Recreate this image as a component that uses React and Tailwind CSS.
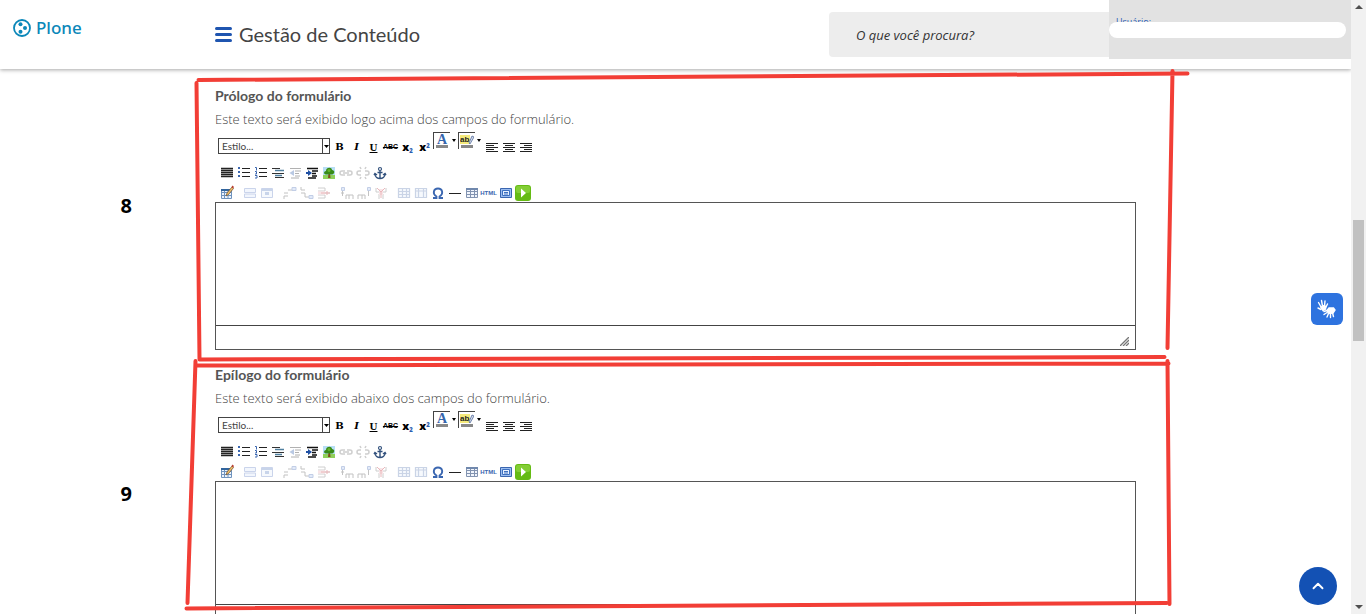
import { ChevronUp } from 'lucide-react';

const sections = [
    {
        id: 'prologo',
        number: '8',
        numberClass: 'pt-[104px]',
        title: 'Prólogo do formulário',
        description: 'Este texto será exibido logo acima dos campos do formulário.',
    },
    {
        id: 'epilogo',
        number: '9',
        numberClass: 'pt-[113px]',
        title: 'Epílogo do formulário',
        description: 'Este texto será exibido abaixo dos campos do formulário.',
    },
];

function Icon({ children, faded }) {
    return (
        <svg viewBox="0 0 16 16" className={faded ? 'size-4 shrink-0 opacity-35' : 'size-4 shrink-0'} fill="none" aria-hidden="true">
            {children}
        </svg>
    );
}

function ToolButton({ label, children }) {
    return (
        <button type="button" aria-label={label} title={label} className="flex h-4 w-[17px] shrink-0 items-center justify-center text-black">
            {children}
        </button>
    );
}

function Align({ d }) {
    return (
        <Icon>
            <path d={d} stroke="#222" strokeWidth="1" shapeRendering="crispEdges" />
        </Icon>
    );
}

const alignments = [
    ['Alinhar à esquerda', 'M2 4.5h12M2 6.5h8M2 8.5h12M2 10.5h8M2 12.5h12'],
    ['Centralizar', 'M2 4.5h12M4 6.5h8M2 8.5h12M4 10.5h8M2 12.5h12'],
    ['Alinhar à direita', 'M2 4.5h12M6 6.5h8M2 8.5h12M6 10.5h8M2 12.5h12'],
];

const grid = 'M2.5 3.5h11v9h-11zM2.5 6.5h11M2.5 9.5h11M6.5 3.5v9M10.5 3.5v9';

const listTools = [
    ['Justificar', <path d="M2 3.5h12M2 5.5h12M2 7.5h12M2 9.5h12M2 11.5h12" stroke="#222" strokeWidth="1.3" />],
    ['Lista não ordenada', <>
        <path d="M6 3.5h8M6 7.5h8M6 11.5h8" stroke="#222" />
        <path d="M2 3h2M2 7h2M2 11h2" stroke="#3a66b0" strokeWidth="2" />
    </>],
    ['Lista ordenada', <>
        <path d="M6 3.5h8M6 7.5h8M6 11.5h8" stroke="#222" />
        <path d="M2 2.5h1.5v3M2 6.5h1.5v2.5H2M2 10.5h2v2.5H2" stroke="#3a66b0" />
    </>],
    ['Lista de definições', <>
        <path d="M2 3.5h8M2 8.5h12M5 12.5h9" stroke="#333" />
        <path d="M5 5.5h9M5 10.5h7" stroke="#4f7f9f" strokeWidth="1.5" />
    </>],
    ['Diminuir recuo', <>
        <path d="M3 3.5h11M8 6h6M8 8.5h4M8 11h5M4 13h8" stroke="#222" />
        <path d="M7 5v6L2.5 8z" fill="#3a66b0" />
    </>, true],
    ['Aumentar recuo', <>
        <path d="M3 3.5h11M8 6h6M8 8.5h4M8 11h5M4 13h8" stroke="#111" strokeWidth="1.5" />
        <path d="M2 8h3" stroke="#1e4fa3" strokeWidth="2" />
        <path d="M4 5v6l4-3z" fill="#1e4fa3" />
    </>],
    ['Inserir imagem', <>
        <path d="M2 2h12v9H2z" fill="#b8dff5" />
        <path d="M2 10h12v4H2z" fill="#8fd05a" />
        <path d="M7.5 8h1.5l.5 5H7z" fill="#804d20" />
        <path d="M5 9.5C2 9 3 6 5 6c0-4 6-4 6-1 3 0 3 4 0 4.5z" fill="#388b17" />
        <circle cx="8" cy="5.5" r="1.5" fill="#66b52b" />
    </>],
    ['Inserir link', <path d="M7 6H4q-2 0-2 2t2 2h3M9 6h3q2 0 2 2t-2 2H9M5 8h6" stroke="#777" strokeWidth="1.5" />, true],
    ['Remover link', <path d="M6 6H4q-2 0-2 2t2 2h2M10 6h2q2 0 2 2t-2 2h-2M6 4 5 2M10 4l1-2M6 12l-1 2M10 12l1 2" stroke="#777" strokeWidth="1.5" />, true],
    ['Âncora', <>
        <circle cx="8" cy="4" r="1.5" stroke="#32517d" strokeWidth="1.2" />
        <path d="M8 5.5V13M5.5 7.5h5M3 9c0 3 2.5 4.5 5 4.5s5-1.5 5-4.5M2 10l1-1.500 2 1.500M14 10l-1-1.500-2 1.500" stroke="#32517d" strokeWidth="1.4" />
    </>],
];

// each inner list is a group, separated by a small gap
const tableTools = [
    [
        ['Inserir tabela', <>
            <path d="M2.5 4.5h10v9h-10zM2.5 7.5h10M2.5 10.5h10M5.5 4.5v9M9 4.5v9" fill="#edf4fd" stroke="#6f93be" />
            <path d="M2 4h11v2H2z" fill="#32659d" />
            <path d="m7 11 1-3 5-6 1.5 1.5-5 6z" fill="#efbd68" stroke="#6b5132" strokeWidth=".7" />
            <path d="m12.5 2 1-1.5L15 2l-1 1.5z" fill="#b93b30" />
        </>],
    ],
    [
        ['Propriedades da linha', <path d="M2.5 3.5h11v4h-11zM2.5 9h11v3.5h-11z" fill="#dce6fa" stroke="#6b86c8" />, true],
        ['Propriedades da célula', <>
            <path d="M2.5 3.5h11v9h-11z" fill="#e7eefb" stroke="#6b86c8" />
            <path d="M3 4h10v2H3zM6 7h4v3H6z" fill="#6385c4" />
        </>, true],
    ],
    [
        ['Inserir linha antes', <>
            <path d="M2 14v-3h4M2 8h4M6 5h4" stroke="#555" />
            <path d="M10 2.5h4v3h-4z" fill="#adc5ee" stroke="#5475b8" />
        </>, true],
        ['Inserir linha depois', <>
            <path d="M2 2v3h4M2 8h4v4h4" stroke="#555" />
            <path d="M10 10.5h4v3h-4z" fill="#adc5ee" stroke="#5475b8" />
        </>, true],
        ['Remover linha', <>
            <path d="M2 3h7v3H2M2 13h7v-3H2M2 8h12" stroke="#777" />
            <path d="M2 6.5h7v3H2z" fill="#eeb5bb" />
            <path d="M5 8h9M11 6v4" stroke="#c5343f" />
        </>, true],
    ],
    [
        ['Inserir coluna antes', <>
            <path d="M3.5 6v5M2 8h3M7 14v-4h3v4M10 10h4v4" stroke="#555" />
            <path d="M2.5 2.5h3v3h-3z" fill="#adc5ee" stroke="#5475b8" />
        </>, true],
        ['Inserir coluna depois', <>
            <path d="M12.5 6v5M2 14v-4h4v4M6 10h3v4" stroke="#555" />
            <path d="M11.5 2.5h3v3h-3z" fill="#adc5ee" stroke="#5475b8" />
        </>, true],
        ['Remover coluna', <>
            <path d="M3 3v4h3M13 3v4h-3M6 14V9M10 14V9" stroke="#777" />
            <path d="M6 4h4v6H6z" fill="#eeb5bb" />
            <path d="m4 3 4 4 4-4M8 7v6" stroke="#c5343f" />
        </>, true],
    ],
    [
        ['Dividir células', <path d={grid} fill="#e7eefb" stroke="#6b86b8" strokeWidth="1.2" />, true],
        ['Mesclar células', <path d="M2.5 3.5h11v9h-11zM2.5 6h11M5.5 3.5v9M10.5 3.5v9" fill="#e7eefb" stroke="#6b86b8" strokeWidth="1.2" />, true],
        ['Caractere especial', <path d="M3 13h3.5v-1.5C2 9 3.5 3.5 8 3.5s6 5.5 1.5 8V13H13" stroke="#3a66b0" strokeWidth="1.8" />],
        ['Linha horizontal', <path d="M2 8.5h12" stroke="#222" shapeRendering="crispEdges" />],
        ['Tabela', <>
            <path d={grid} fill="#f1f5fc" stroke="#8293b0" />
            <path d="M2 3h12v2H2z" fill="#7088ad" />
        </>],
        ['Editar HTML', null],
        ['Tela cheia', <>
            <path d="M2.5 3.5h11v9h-11z" fill="#9bbdf0" stroke="#3a66b0" />
            <path d="M4.5 5.5h7v5h-7z" fill="#e8f1ff" stroke="#3d70c0" />
            <path d="M6 7.5h4M6 9h4" stroke="#3d70c0" />
        </>],
        ['Inserir mídia', <>
            <rect x="0" y="0" width="16" height="16" rx="3" fill="#65bb14" />
            <rect x="1" y="1" width="14" height="7" rx="2" fill="#83ce35" />
            <path d="M6 3.5 11 8l-5 4.5z" fill="#fff" />
        </>],
    ],
];

function ColorButton({ label, children }) {
    return (
        <div className="flex w-[25px] shrink-0 self-start pt-px">
            <button type="button" aria-label={label} className="flex size-[17px] items-center justify-center border-t border-l border-[#444]">
                {children}
            </button>
            <button type="button" aria-label={`${label}: opções`} className="flex flex-1 items-center justify-center">
                <svg viewBox="0 0 4 3" className="h-[3px] w-1" aria-hidden="true">
                    <path d="M0 0h4L2 3z" fill="#000" />
                </svg>
            </button>
        </div>
    );
}

function Toolbar() {
    return (
        <div className="mt-1 pl-[3px]">
            <div className="flex h-6 items-end">
                <div className="relative mr-px mb-px h-4 w-28 shrink-0">
                    <select aria-label="Estilo" className="block h-4 w-full appearance-none border border-[#444] bg-white pl-[3px] font-['Lato'] text-[10px] text-[#444]">
                        <option>Estilo...</option>
                    </select>
                    <span className="pointer-events-none absolute inset-y-0 right-0 flex w-2 items-center justify-center border border-[#444]">
                        <svg viewBox="0 0 5 3" className="h-[3px] w-[5px] shrink-0" aria-hidden="true">
                            <path d="M0 0h5L2.5 3z" fill="#000" />
                        </svg>
                    </span>
                </div>
                <ToolButton label="Negrito"><span className="font-['DejaVu_Serif'] text-[10px] leading-4 font-bold">B</span></ToolButton>
                <ToolButton label="Itálico"><span className="font-['DejaVu_Serif'] text-[10px] leading-4 font-bold italic">I</span></ToolButton>
                <ToolButton label="Sublinhado"><span className="font-['Liberation_Serif'] text-[11px] leading-4 font-bold underline">U</span></ToolButton>
                <ToolButton label="Tachado"><span className="font-['Liberation_Sans'] text-[7px] leading-4 font-bold line-through">ABC</span></ToolButton>
                <ToolButton label="Subscrito">
                    <span className="font-['Open_Sans'] text-[11px] leading-4 font-extrabold">x<sub className="text-[6px] text-[#2a5db0]">2</sub></span>
                </ToolButton>
                <ToolButton label="Sobrescrito">
                    <span className="font-['Open_Sans'] text-[11px] leading-4 font-extrabold">x<sup className="text-[6px] text-[#2a5db0]">2</sup></span>
                </ToolButton>
                <ColorButton label="Cor do texto">
                    <span className="h-[14px] w-3 border-b-[3px] border-[#888] text-center font-['Liberation_Serif'] text-[14px] leading-[11px] font-bold text-[#3565ad]">A</span>
                </ColorButton>
                <ColorButton label="Cor de fundo">
                    <svg viewBox="0 0 14 14" className="size-[14px]" aria-hidden="true">
                        <path d="M0 1h10v9H0z" fill="#f5ea7b" />
                        <text x="0" y="8" fontSize="8" fontWeight="bold" fontFamily="Liberation Sans" fill="#222">ab</text>
                        <path d="m9 9 3-7 2 1-4 7z" fill="#d7dce8" stroke="#536da0" strokeWidth=".8" />
                        <path d="M1 11h12v3H1z" fill="#888" />
                    </svg>
                </ColorButton>
                {alignments.map(([label, d]) => (
                    <ToolButton key={label} label={label}><Align d={d} /></ToolButton>
                ))}
            </div>
            <div className="mt-[10px] flex h-4">
                {listTools.map(([label, drawing, faded]) => (
                    <ToolButton key={label} label={label}><Icon faded={faded}>{drawing}</Icon></ToolButton>
                ))}
            </div>
            <div className="mt-1 mb-px flex h-4 gap-1.5">
                {tableTools.map((group) => (
                    <div key={group[0][0]} className="flex">
                        {group.map(([label, drawing, faded]) => (
                            <ToolButton key={label} label={label}>
                                {drawing ? (
                                    <Icon faded={faded}>{drawing}</Icon>
                                ) : (
                                    <span className="font-['Liberation_Sans'] text-[6px] leading-4 font-bold text-[#3a66b0]">HTML</span>
                                )}
                            </ToolButton>
                        ))}
                    </div>
                ))}
            </div>
        </div>
    );
}

function EditorSection({ section }) {
    return (
        <section className="grid grid-cols-[1fr_minmax(0,921px)_1fr] pb-[17px]">
            <div className={`pr-[83px] text-right font-['Noto_Sans'] text-xl leading-7 font-bold text-black ${section.numberClass}`}>
                {section.number}
            </div>
            <div>
                <label htmlFor={section.id} className="block font-['Lato'] text-[14px] leading-4 font-bold text-[#555]">{section.title}</label>
                <p className="mt-[7px] text-[13px] leading-4 font-light text-[#444]">{section.description}</p>
                <Toolbar />
                <div className="border border-[#555]">
                    <textarea id={section.id} className="block h-[122px] w-full resize-none outline-none" />
                    <div className="flex h-6 items-end justify-end border-t border-[#444] pr-1.5 pb-[3px]">
                        <svg viewBox="0 0 9 9" className="size-[9px]" aria-hidden="true">
                            <path d="M0 9 9 0M3 9l6-6M6 9l3-3" stroke="#777" strokeWidth="1.3" />
                        </svg>
                    </div>
                </div>
            </div>
        </section>
    );
}

function Header() {
    return (
        <header className="relative grid h-[69px] grid-cols-[1fr_minmax(0,921px)_1fr] bg-white shadow-[0_1px_4px_rgba(0,0,0,0.35)]">
            <a href="#" className="mt-[18px] flex h-5 items-center gap-[5px] pl-[13px] text-[#0a87b9]">
                <svg viewBox="0 0 18 18" className="size-[18px]" fill="none" aria-hidden="true">
                    <circle cx="9" cy="9" r="8" stroke="currentColor" strokeWidth="1.8" />
                    <circle cx="7.5" cy="5.2" r="2" fill="currentColor" />
                    <circle cx="12" cy="9" r="2" fill="currentColor" />
                    <circle cx="7.5" cy="12.8" r="2" fill="currentColor" />
                </svg>
                <span className="font-['Noto_Sans'] text-[17px] leading-5 font-medium">Plone</span>
            </a>
            <div className="flex items-start justify-between">
                <div className="mt-5 flex items-center gap-[7px]">
                    <button type="button" aria-label="Menu" className="flex h-7 w-[17px] flex-col justify-center gap-[3px]">
                        <span className="h-[3px] rounded-xs bg-[#1f55b0]" />
                        <span className="h-[3px] rounded-xs bg-[#1f55b0]" />
                        <span className="h-[3px] rounded-xs bg-[#1f55b0]" />
                    </button>
                    <span className="font-['Lato'] text-[20px] leading-7 text-[#444]">Gestão de Conteúdo</span>
                </div>
                <input
                    type="search"
                    aria-label="Buscar"
                    placeholder="O que você procura?"
                    className="mt-3 h-[45px] w-[307px] rounded bg-[#ededed] px-[27px] text-[13px] italic placeholder:text-[#333]"
                />
            </div>
            <div className="absolute top-0 right-0 h-[59px] w-[242px] bg-[#e2e2e2] pt-4 pr-[5px]">
                <p className="pl-[7px] text-[9px] leading-3 text-[#2f5fb5]">Usuário:</p>
                <div className="relative -mt-1.5 h-4 rounded-full bg-white" />
            </div>
        </header>
    );
}

function ScrollTrack() {
    return (
        <div className="flex w-[15px] shrink-0 flex-col items-center bg-[#f1f1f1] py-[5px]" aria-hidden="true">
            <svg viewBox="0 0 8 4" className="h-1 w-2 shrink-0"><path d="M0 4h8L4 0z" fill="#505050" /></svg>
            <div className="flex-[211]" />
            <div className="w-[11px] flex-[121] bg-[#c1c1c1]" />
            <div className="flex-[264]" />
            <svg viewBox="0 0 8 4" className="h-1 w-2 shrink-0"><path d="M0 0h8L4 4z" fill="#505050" /></svg>
        </div>
    );
}

export default function App() {
    return (
        <div className="flex h-screen overflow-hidden bg-white font-['Open_Sans',sans-serif]">
            <div className="relative min-w-0 flex-1 overflow-hidden">
                <Header />
                <main className="pt-[19px]">
                    {sections.map((section) => (
                        <EditorSection key={section.id} section={section} />
                    ))}
                </main>

                {/* Hand-drawn marks around each field */}
                <svg
                    viewBox="0 0 1351 614"
                    className="pointer-events-none absolute top-0 left-1/2 h-[614px] w-[1351px] -translate-x-1/2"
                    fill="none"
                    stroke="#f23e36"
                    strokeWidth="4"
                    strokeLinecap="round"
                    aria-hidden="true"
                >
                    <path d="M198 80 1187 73.5M1172 71 1167 348M196 83 199 359M199 359.5 1164 357" />
                    <path d="M195 365.5 1168 363.5M195 361 187 603M1167 361 1169 604M186 608.5 1166 603" />
                </svg>

                <button type="button" aria-label="Conteúdo acessível em Libras" className="absolute top-[293px] right-2 size-8 rounded-md bg-[#2e73df]">
                    <svg viewBox="0 0 32 32" className="size-8" fill="none" stroke="#fff" strokeWidth="1.4" strokeLinecap="round" aria-hidden="true">
                        <path d="m10 14-2.500-4.500M11.500 13l-1-5.500M13.500 13l.5-5M15 14l1.500-3M10 16.500 7 15" />
                        <path d="M10 14.500 12 12.500l3 1-.5 2.500-2.500 1.500z" fill="#fff" />
                        <path d="m16 19.500-3 2M17.500 20.500l-1.500 3.500M19.500 20.500v4M21.500 20l1 3.500M16 17.500l-3 1" />
                        <path d="M16 17.500 18 15h4.500l1.500 2-2 3-4.500.5z" fill="#fff" />
                    </svg>
                </button>
                <a href="#" aria-label="Voltar ao topo" className="absolute right-[14px] bottom-[9px] flex size-[38px] items-center justify-center rounded-full bg-[#1351b4] text-white">
                    <ChevronUp className="size-[18px]" strokeWidth={2.5} />
                </a>
            </div>
            <ScrollTrack />
        </div>
    );
}
